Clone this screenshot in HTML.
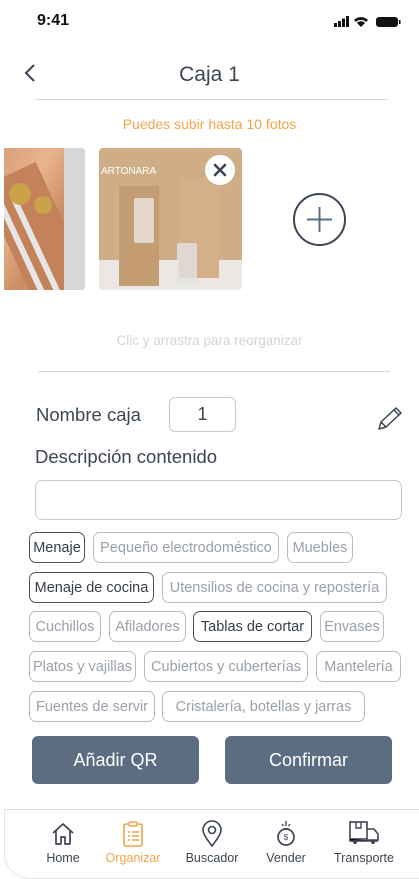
<!DOCTYPE html>
<html><head><meta charset="utf-8">
<style>
*{margin:0;padding:0;box-sizing:border-box}
body{width:419px;height:879px;background:#fff;font-family:"Liberation Sans",sans-serif;position:relative;overflow:hidden;color:#3d4453}
.a{position:absolute}
.chip{position:absolute;height:31px;border:1px solid #b9bdc3;border-radius:7px;font-size:14.5px;color:#9aa0a8;display:flex;align-items:center;justify-content:center;white-space:nowrap;letter-spacing:0}
.chip.on{border-color:#4a5160;color:#363c48}
.btn{position:absolute;top:736px;height:48px;width:167px;background:#5c6c81;border-radius:6px;color:#fff;font-size:18px;display:flex;align-items:center;justify-content:center}
.nav{position:absolute;top:851px;font-size:12.5px;color:#3d4453;transform:translateX(-50%)}
</style></head><body>
<div class="a" style="left:37px;top:12px;font-weight:bold;font-size:16px;color:#111">9:41</div>
<svg class="a" style="left:332px;top:15px" width="70" height="14" viewBox="0 0 70 14">
<rect x="2" y="8" width="3" height="4" fill="#111"/><rect x="6" y="6" width="3" height="6" fill="#111"/><rect x="10" y="3.5" width="3" height="8.5" fill="#111"/><rect x="14" y="1" width="3" height="11" fill="#111"/>
<path d="M22 5 A10 10 0 0 1 36 5 L34 7 A7 7 0 0 0 24 7Z M25 8 A5.5 5.5 0 0 1 33 8 L29 12Z" fill="#111"/>
<rect x="44" y="2" width="22" height="10" rx="3" fill="#111"/><rect x="67" y="5" width="1.5" height="4" fill="#111"/>
</svg>
<svg class="a" style="left:22px;top:63px" width="16" height="20"><path d="M12 2 L4 10 L12 18" stroke="#3d4453" stroke-width="2" fill="none"/></svg>
<div class="a" style="left:0;width:419px;top:63px;text-align:center;font-size:21px;color:#3d4453">Caja 1</div>
<div class="a" style="left:35px;top:99px;width:353px;height:1px;background:#d6d8dc"></div>
<div class="a" style="left:0;width:419px;top:116px;text-align:center;font-size:14px;color:#f0a449">Puedes subir hasta 10 fotos</div>
<!-- photo 1 -->
<div class="a" style="left:4px;top:148px;width:81px;height:142px;border-radius:0 4px 4px 0;overflow:hidden;background:linear-gradient(120deg,#d9a07a 0%,#e8b48e 30%,#c98a60 60%,#f1c9a6 100%)">
<div class="a" style="left:4px;top:20px;width:60px;height:140px;background:#c4825a;transform:rotate(-25deg)"></div>
<div class="a" style="left:12px;top:40px;width:6px;height:110px;background:#e6e6e6;transform:rotate(-25deg)"></div>
<div class="a" style="left:30px;top:45px;width:6px;height:110px;background:#e6e6e6;transform:rotate(-25deg)"></div>
<div class="a" style="left:5px;top:35px;width:22px;height:22px;border-radius:50%;background:#c9a24a"></div>
<div class="a" style="left:30px;top:48px;width:18px;height:18px;border-radius:50%;background:#c9a24a"></div>
<div class="a" style="left:60px;top:0;width:25px;height:142px;background:#d7d6d8"></div>
</div>
<!-- photo 2 -->
<div class="a" style="left:99px;top:148px;width:143px;height:142px;border-radius:4px;overflow:hidden;background:#cfae87">
<div class="a" style="left:0;top:112px;width:143px;height:30px;background:#ebe8e4"></div>
<div class="a" style="left:20px;top:38px;width:40px;height:100px;background:#c59d72"></div>
<div class="a" style="left:80px;top:30px;width:40px;height:100px;background:#d4b089"></div>
<div class="a" style="left:35px;top:50px;width:20px;height:45px;background:#e9e6e2;opacity:.8;border-radius:2px"></div>
<div class="a" style="left:78px;top:95px;width:20px;height:40px;background:#e2e2e2;opacity:.8;border-radius:2px"></div>
<div class="a" style="left:2px;top:18px;font-size:10px;color:#fff">ARTONARA</div>
<div class="a" style="left:106px;top:7px;width:30px;height:30px;border-radius:50%;background:#fff"></div>
<svg class="a" style="left:106px;top:7px" width="30" height="30"><path d="M10 10 L20 20 M20 10 L10 20" stroke="#3d4453" stroke-width="2.6" stroke-linecap="round"/></svg>
</div>
<svg class="a" style="left:292px;top:192px" width="55" height="55"><circle cx="27.5" cy="27.5" r="25.5" stroke="#3d4453" stroke-width="2" fill="none"/><path d="M27.5 15 V40 M15 27.5 H40" stroke="#5c6c81" stroke-width="2"/></svg>
<div class="a" style="left:0;width:419px;top:333px;text-align:center;font-size:13.5px;color:#d2d4d8">Clic y arrastra para reorganizar</div>
<div class="a" style="left:38px;top:371px;width:352px;height:1px;background:#d6d8dc"></div>
<div class="a" style="left:36px;top:404px;font-size:18.5px">Nombre caja</div>
<div class="a" style="left:169px;top:397px;width:67px;height:35px;border:1px solid #c5c8cc;border-radius:6px;text-align:center;line-height:33px;font-size:18px">1</div>
<svg class="a" style="left:376px;top:406px" width="28" height="26" viewBox="0 0 28 26"><path d="M3 23 L5 16 L20 2 L25 7 L10 21 Z M5 16 L10 21 M18 4 L23 9 M3 23 L7 22" stroke="#3d4453" stroke-width="1.5" fill="none" stroke-linejoin="round"/></svg>
<div class="a" style="left:35px;top:446px;font-size:18.5px">Descripción contenido</div>
<div class="a" style="left:35px;top:480px;width:367px;height:40px;border:1px solid #c5c8cc;border-radius:7px"></div>
<div class="chip on" style="left:29px;top:532px;width:56px">Menaje</div>
<div class="chip" style="left:93px;top:532px;width:186px">Pequeño electrodoméstico</div>
<div class="chip" style="left:287px;top:532px;width:66px">Muebles</div>
<div class="chip on" style="left:29px;top:572px;width:125px">Menaje de cocina</div>
<div class="chip" style="left:162px;top:572px;width:225px">Utensilios de cocina y repostería</div>
<div class="chip" style="left:29px;top:611px;width:72px">Cuchillos</div>
<div class="chip" style="left:109px;top:611px;width:77px">Afiladores</div>
<div class="chip on" style="left:193px;top:611px;width:119px">Tablas de cortar</div>
<div class="chip" style="left:320px;top:611px;width:64px">Envases</div>
<div class="chip" style="left:29px;top:651px;width:107px">Platos y vajillas</div>
<div class="chip" style="left:144px;top:651px;width:164px">Cubiertos y cuberterías</div>
<div class="chip" style="left:316px;top:651px;width:85px">Mantelería</div>
<div class="chip" style="left:29px;top:691px;width:126px">Fuentes de servir</div>
<div class="chip" style="left:162px;top:691px;width:203px">Cristalería, botellas y jarras</div>
<div class="btn" style="left:32px">Añadir QR</div>
<div class="btn" style="left:225px">Confirmar</div>
<div class="a" style="left:4px;top:809px;width:430px;height:70px;border:1px solid #e4e5e7;border-right:none;border-radius:0 0 0 26px;border-top-color:#dcdde0"></div>
<svg class="a" style="left:50px;top:821px" width="26" height="26" viewBox="0 0 26 26"><path d="M3 12 L13 3 L23 12 M6 10 V23 H11 V16 H15 V23 H20 V10" stroke="#3d4453" stroke-width="1.7" fill="none" stroke-linejoin="round"/></svg>
<svg class="a" style="left:121px;top:820px" width="24" height="28" viewBox="0 0 24 28"><rect x="3" y="4" width="18" height="22" rx="2" stroke="#f0a449" stroke-width="1.6" fill="none"/><rect x="8" y="2" width="8" height="4" rx="1" stroke="#f0a449" stroke-width="1.4" fill="#fff"/><path d="M7 12h2M11 12h7M7 16h2M11 16h7M7 20h2M11 20h7" stroke="#f0a449" stroke-width="1.4"/></svg>
<svg class="a" style="left:200px;top:820px" width="24" height="28" viewBox="0 0 24 28"><path d="M12 26 C6 18 3 14 3 10 A9 9 0 0 1 21 10 C21 14 18 18 12 26Z" stroke="#3d4453" stroke-width="1.6" fill="none"/><circle cx="12" cy="10" r="3.5" stroke="#3d4453" stroke-width="1.6" fill="none"/></svg>
<svg class="a" style="left:274px;top:820px" width="24" height="28" viewBox="0 0 24 28"><path d="M12 1v5M8 4l1.5 2M16 4l-1.5 2" stroke="#3d4453" stroke-width="1.4"/><circle cx="12" cy="17" r="8" stroke="#3d4453" stroke-width="1.7" fill="none"/><path d="M10 9h4" stroke="#3d4453" stroke-width="1.7"/><text x="12" y="20" font-size="8" text-anchor="middle" fill="#3d4453" font-family="Liberation Sans">$</text></svg>
<svg class="a" style="left:348px;top:820px" width="32" height="26" viewBox="0 0 32 26"><rect x="2" y="2" width="17" height="17" stroke="#3d4453" stroke-width="1.6" fill="none"/><path d="M8 2v6h5V2" stroke="#3d4453" stroke-width="1.4" fill="none"/><path d="M19 9h7l4 5v6H19" stroke="#3d4453" stroke-width="1.6" fill="none"/><path d="M2 19v2h28" stroke="#3d4453" stroke-width="1.6"/><circle cx="7" cy="22" r="2" fill="#3d4453"/><circle cx="25" cy="22" r="2" fill="#3d4453"/></svg>
<div class="nav" style="left:63px">Home</div>
<div class="nav" style="left:133px;color:#f0a449">Organizar</div>
<div class="nav" style="left:212px">Buscador</div>
<div class="nav" style="left:286px">Vender</div>
<div class="nav" style="left:364px">Transporte</div>
</body></html>
